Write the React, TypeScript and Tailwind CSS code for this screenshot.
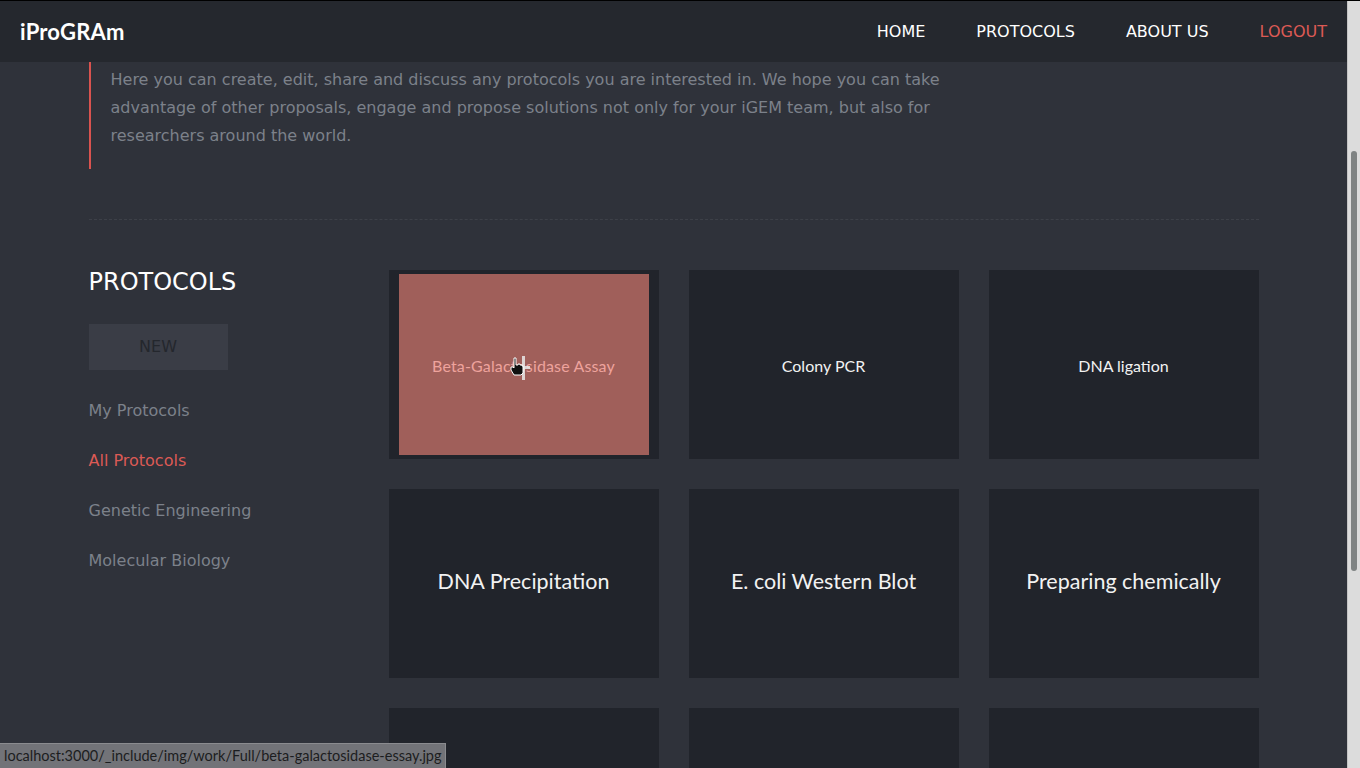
import React from "react";

const dv = { fontFamily: '"DejaVu Sans", Verdana, sans-serif' };
const lato = { fontFamily: 'Lato, "Open Sans", sans-serif' };

function Card({ title, big, image }: { title: string; big?: boolean; image?: boolean }) {
  if (image) {
    return (
      <div className="relative h-[189px] bg-[#21242b] px-[10px] py-[4px]">
        <div className="flex h-full items-center justify-center bg-[#a05f5a] pt-[3px]">
          <span className="text-[16px] tracking-[0.15px] text-[#eea39d]" style={lato}>{title}</span>
        </div>
        <svg className="absolute left-[121px] top-[86px]" width="20" height="24" viewBox="0 0 20 24">
          <rect x="12" y="0" width="3" height="24" fill="#e8e8e8" opacity="0.85" />
          <rect x="12" y="10" width="8" height="3" fill="#e8e8e8" opacity="0.85" />
          <path d="M4 2 L6 2 L6 9 L8 9 L8 8 L10 8 L10 9 L12 9 L12 10 L13 10 L13 17 L11 19 L4 19 L1 14 L1 11 L3 11 L4 12 Z" fill="#111" stroke="#fff" strokeWidth="1" />
        </svg>
      </div>
    );
  }
  return (
    <div
      className={
        big
          ? "flex h-[189px] items-center justify-center bg-[#21242b] pb-[5px]"
          : "flex h-[189px] items-center justify-center bg-[#21242b] pt-[3px]"
      }
    >
      <span className={big ? "text-[21.5px] text-[#f2f2f2]" : "text-[16px] text-[#f2f2f2]"} style={lato}>
        {title}
      </span>
    </div>
  );
}

export default function App() {
  return (
    <div className="flex h-[768px] w-[1360px] overflow-hidden border-t border-black bg-[#2f323a]">
      <div className="relative flex h-full w-[1347px] flex-col overflow-hidden">
        {/* nav */}
        <nav className="flex h-[61px] shrink-0 items-center justify-between bg-[#25282e] pl-[20px] pr-[20px]">
          <div className="text-[22px] font-bold tracking-[0.2px] text-white" style={lato}>iProGRAm</div>
          <div className="flex items-center gap-[51px] text-[16px]" style={dv}>
            <span className="text-white">HOME</span>
            <span className="text-white">PROTOCOLS</span>
            <span className="text-white">ABOUT US</span>
            <span className="text-[#dc5a55]">LOGOUT</span>
          </div>
        </nav>

        <div className="mx-auto w-[1170px]" style={dv}>
          {/* blockquote */}
          <div className="border-l-[2px] border-[#d9534f] pb-[19px] pl-[20px] pt-[4px]">
            <p className="w-[840px] text-[16px] leading-[28px] text-[#7c818a]">
              Here you can create, edit, share and discuss any protocols you are interested in. We hope you can take advantage of other proposals, engage and propose solutions not only for your iGEM team, but also for researchers around the world.
            </p>
          </div>

          <div className="mt-[50px] border-t border-dashed border-[#3d4048]" />

          <div className="mt-[50px] flex">
            <aside className="w-[300px] shrink-0">
              <h2 className="mt-[-2px] text-[24px] leading-[28px] text-white">PROTOCOLS</h2>
              <button className="mt-[28px] flex h-[46px] w-[139px] items-center justify-center bg-[#3a3d46] text-[16px] text-[#24272d]">
                NEW
              </button>
              <ul className="mt-[30px] flex flex-col gap-[28px] text-[16px] leading-[22px] text-[#7c818a]">
                <li>My Protocols</li>
                <li className="text-[#dc5a55]">All Protocols</li>
                <li>Genetic Engineering</li>
                <li>Molecular Biology</li>
              </ul>
            </aside>
            <div className="grid w-[870px] grid-cols-3 gap-[30px]">
              <Card title="Beta-Galactosidase Assay" image />
              <Card title="Colony PCR" />
              <Card title="DNA ligation" />
              <Card title="DNA Precipitation" big />
              <Card title="E. coli Western Blot" big />
              <Card title="Preparing chemically" big />
              <Card title="" />
              <Card title="" />
              <Card title="" />
            </div>
          </div>
        </div>

        {/* status bar */}
        <div className="absolute bottom-0 left-0 flex h-[25px] w-[446px] items-center border-t border-r border-[#8a8b8f] bg-[#727378] pl-[4px] text-[14.5px] text-[#1c1d20]" style={lato}>
          localhost:3000/_include/img/work/Full/beta-galactosidase-essay.jpg
        </div>
      </div>

      {/* scrollbar */}
      <div className="relative h-full w-[13px] shrink-0 border-l border-[#c4c4c4] bg-[#dcdcdc]">
        <div className="absolute left-[3px] top-[150px] h-[420px] w-[6px] rounded-[3px] bg-[#7f8383]" />
      </div>
    </div>
  );
}
